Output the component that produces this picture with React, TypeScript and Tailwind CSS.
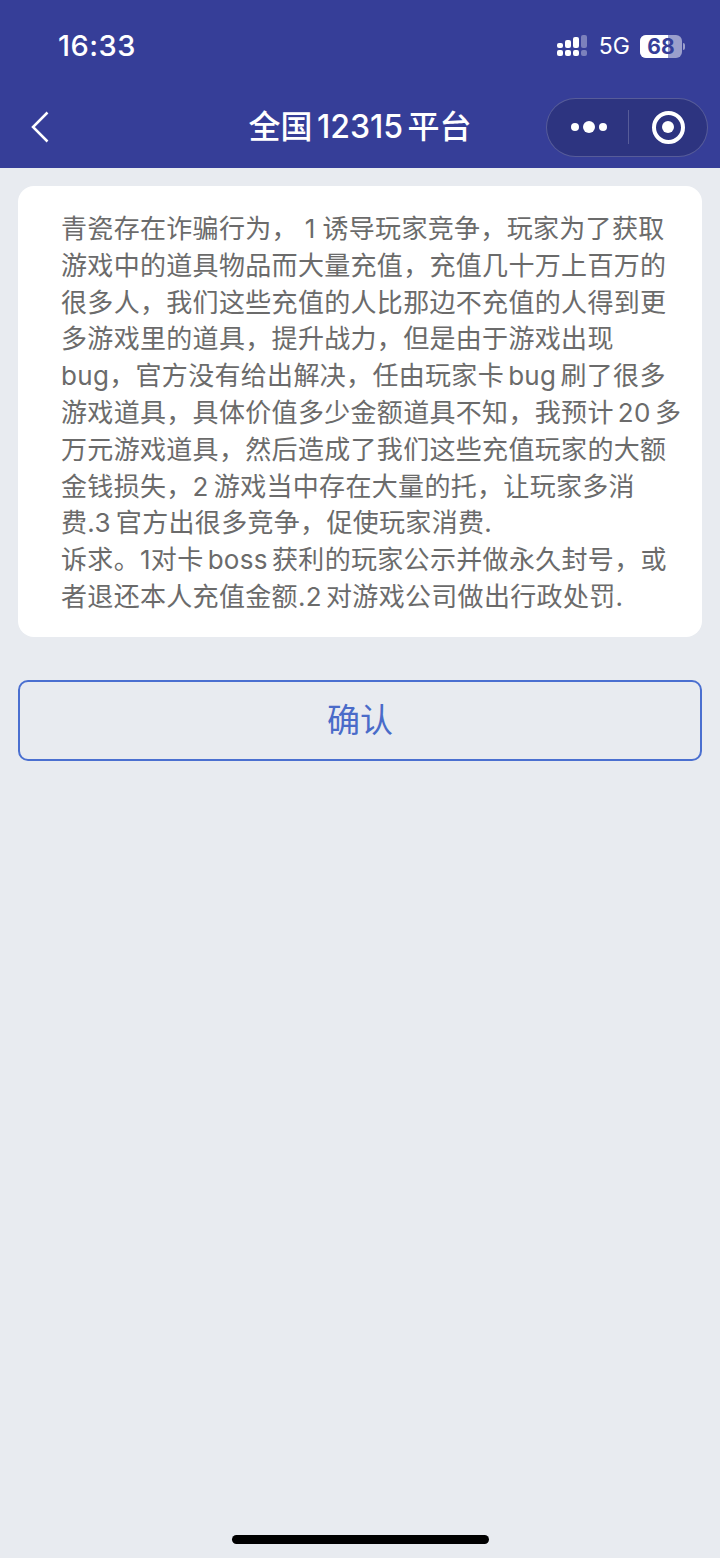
const FONT = "font-['Inter','Noto_Sans_CJK_SC',sans-serif]";

// \u2005 and \u2009 are the wider gaps of the lines that have them; word-spacing leaves them alone
const LINES = [
  "青瓷存在诈骗行为，\u20051\u2005诱导玩家竞争，玩家为了获取",
  "游戏中的道具物品而大量充值，充值几十万上百万的",
  "很多人，我们这些充值的人比那边不充值的人得到更",
  "多游戏里的道具，提升战力，但是由于游戏出现",
  "bug，官方没有给出解决，任由玩家卡 bug 刷了很多",
  "游戏道具，具体价值多少金额道具不知，我预计 20 多",
  "万元游戏道具，然后造成了我们这些充值玩家的大额",
  "金钱损失，2\u2009游戏当中存在大量的托，让玩家多消",
  "费.3\u2009官方出很多竞争，促使玩家消费.",
  "诉求。1对卡 boss 获利的玩家公示并做永久封号，或",
  "者退还本人充值金额.2 对游戏公司做出行政处罚.",
];

function SignalIcon() {
  return (
    <svg width="30" height="22" viewBox="0 0 30 22" fill="#fff">
      <rect x="0" y="15" width="6" height="6" rx="2" />
      <rect x="8" y="15" width="6" height="6" rx="2" />
      <rect x="16" y="15" width="6" height="6" rx="2" />
      <rect x="24" y="15" width="6" height="6" rx="2" fillOpacity="0.35" />
      <rect x="0" y="8" width="6" height="5" rx="2" />
      <rect x="8" y="5" width="6" height="8" rx="2" />
      <rect x="16" y="2" width="6" height="11" rx="2" />
      <rect x="24" y="0" width="6" height="13" rx="2" fillOpacity="0.35" />
    </svg>
  );
}

function Battery() {
  return (
    <div className="flex items-center">
      <div className="relative flex h-[23px] w-[42px] items-center justify-center overflow-hidden rounded-[6px] bg-white/50">
        <div className="absolute inset-y-0 left-0 w-[28px] bg-white" />
        <span className="relative text-[21px] leading-none font-bold text-[#363e98]">68</span>
      </div>
      <div className="ml-[1px] h-[7px] w-[2px] rounded-r-full bg-white/50" />
    </div>
  );
}

function BackIcon() {
  return (
    <svg width="20" height="32" viewBox="0 0 20 32" fill="none" stroke="#fff" strokeWidth="2.500">
      <path d="M17.500 1.500 3 16l14.500 14.500" />
    </svg>
  );
}

export default function App() {
  return (
    <div className={`flex min-h-[1558px] w-[720px] flex-col bg-[#e8ebf0] ${FONT}`}>
      <header className="bg-[#363e98] text-white">
        <div className="flex h-[90px] items-center justify-between pr-[35px] pl-[58px]">
          <span className="text-[29px] leading-none font-medium tracking-[0.5px]">16:33</span>
          <div className="flex items-center pt-[2px]">
            <SignalIcon />
            <span className="mr-[10px] ml-[12px] text-[23px] leading-none">5G</span>
            <Battery />
          </div>
        </div>
        <div className="relative flex h-[78px] items-center justify-between pr-[12px] pb-[4px] pl-[30px]">
          <BackIcon />
          <h1 className="absolute inset-x-0 text-center text-[32px] leading-none font-medium [word-spacing:-4px]">
            全国 12315 平台
          </h1>
          <div className="relative flex h-[59px] w-[162px] items-center rounded-full border border-white/20 bg-[#2d3480]">
            <div className="flex w-[81px] items-center justify-center gap-[4px] pl-[3px]">
              <span className="size-[8px] rounded-full bg-white" />
              <span className="size-[12px] rounded-full bg-white" />
              <span className="size-[8px] rounded-full bg-white" />
            </div>
            <div className="h-[34px] w-px bg-white/20" />
            <div className="flex flex-1 items-center justify-center">
              <div className="flex size-[33px] items-center justify-center rounded-full border-[4px] border-white">
                <span className="size-[12px] rounded-full bg-white" />
              </div>
            </div>
          </div>
        </div>
      </header>

      <main className="flex flex-1 flex-col px-[18px] pt-[18px]">
        <section className="rounded-[16px] bg-white pt-[25px] pr-[20px] pb-[21px] pl-[43px] text-[26px] leading-[36.800px] font-normal tracking-[0.32px] whitespace-nowrap text-[#6b6b6b] [word-spacing:-3.500px]">
          {LINES.map((line) => (
            <p key={line}>{line}</p>
          ))}
        </section>

        <button
          type="button"
          className="mt-[43px] h-[81px] w-full rounded-[10px] border-2 border-[#4a6fd0] text-[33px] text-[#4a6bc9]"
        >
          确认
        </button>

        <div className="mt-auto flex justify-center pb-[14px]">
          <div className="h-[9px] w-[257px] rounded-full bg-black" />
        </div>
      </main>
    </div>
  );
}
